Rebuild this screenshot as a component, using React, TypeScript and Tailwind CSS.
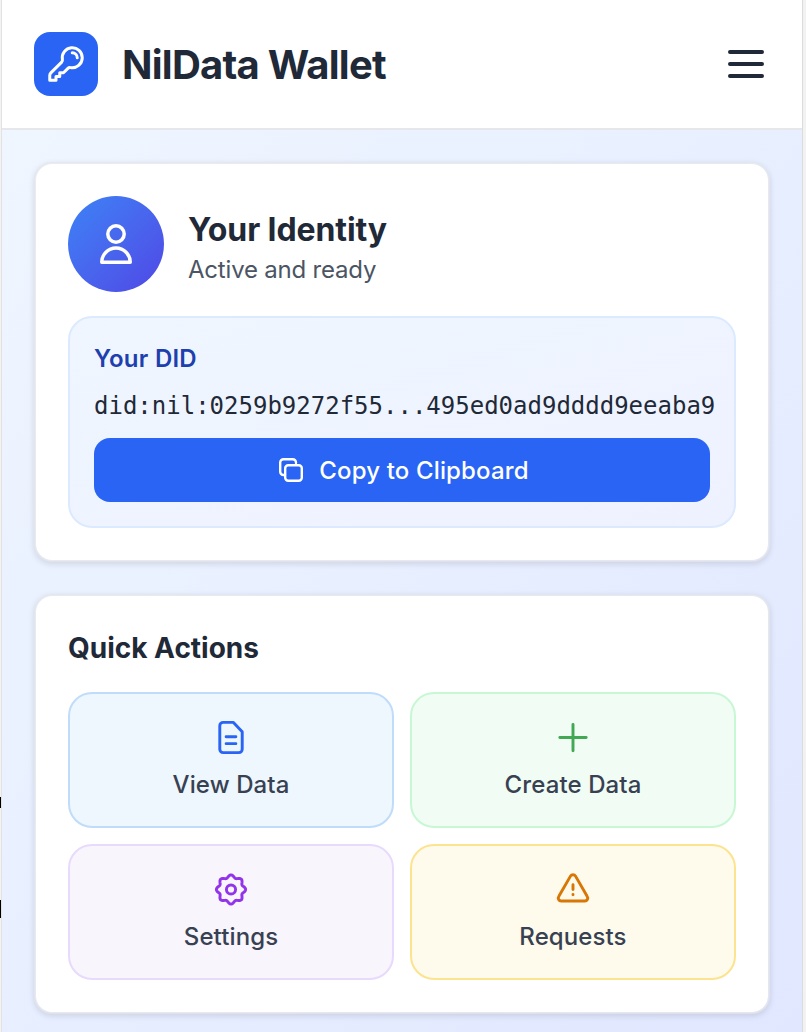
import React from "react";

// eight soft lobes, computed once instead of a long hand written path
const gearPath = (() => {
  const points: string[] = [];
  for (let i = 0; i < 96; i++) {
    const angle = (i / 96) * Math.PI * 2;
    const radius = 13.6 + 1.4 * Math.cos(8 * angle);
    const x = 20 + radius * Math.sin(angle);
    const y = 20 - radius * Math.cos(angle);
    points.push(`${x.toFixed(2)} ${y.toFixed(2)}`);
  }
  return `M${points.join("L")}Z`;
})();

const KeyIcon = () => (
  <svg viewBox="0 0 24 24" fill="none" stroke="currentColor" strokeWidth={1.8} strokeLinecap="round" strokeLinejoin="round" className="w-10 h-10 text-white">
    <path d="M15.75 5.25a3 3 0 0 1 3 3m3 0a6 6 0 0 1-7.029 5.912c-.563-.097-1.159.026-1.563.43L10.5 17.25H8.25v2.25H6v2.25H2.25v-2.818c0-.597.237-1.17.659-1.591l6.499-6.499c.404-.404.527-1 .43-1.563A6 6 0 1 1 21.75 8.25Z" />
  </svg>
);

const MenuIcon = () => (
  <svg viewBox="0 0 48 48" fill="none" stroke="currentColor" strokeWidth={4} strokeLinecap="round" className="w-12 h-12 text-[#1f2937]">
    <path d="M8 12H40M8 24H40M8 36H40" />
  </svg>
);

const UserIcon = () => (
  <svg viewBox="0 0 24 24" fill="none" stroke="currentColor" strokeWidth={1.75} strokeLinejoin="round" className="w-12 h-12 text-white">
    <circle cx="12" cy="7" r="4.1" />
    <path d="M4.875 21.125a7.125 7.125 0 0 1 14.25 0Z" />
  </svg>
);

const CopyIcon = () => (
  <svg viewBox="0 0 24 24" fill="none" stroke="currentColor" strokeWidth={2.4} strokeLinecap="round" strokeLinejoin="round" className="w-6 h-6 text-white">
    <rect x="6.2" y="7.2" width="16.6" height="15.6" rx="3" />
    <path d="M17 5v-.5a3.3 3.3 0 0 0-3.3-3.3H4.5a3.3 3.3 0 0 0-3.3 3.3v9.2A3.3 3.3 0 0 0 4.5 17H5" />
  </svg>
);

const DocIcon = () => (
  <svg viewBox="0 0 40 40" fill="none" stroke="currentColor" strokeWidth={3} strokeLinecap="round" strokeLinejoin="round" className="w-10 h-10 text-[#2964f5]">
    <path d="M12 4.5H22.5L31.5 14V32a3.5 3.5 0 0 1-3.5 3.5H12A3.5 3.5 0 0 1 8.5 32V8A3.5 3.5 0 0 1 12 4.5Z" />
    <path d="M15 19.3H25M15 26.3H25" />
  </svg>
);

const PlusIcon = () => (
  <svg viewBox="0 0 40 40" fill="none" stroke="currentColor" strokeWidth={3} strokeLinecap="round" className="w-10 h-10 text-[#43a853]">
    <path d="M20 6.5V33.5M6.5 20H33.5" />
  </svg>
);

const GearIcon = () => (
  <svg viewBox="0 0 40 40" fill="none" stroke="currentColor" strokeWidth={3} strokeLinejoin="round" className="w-10 h-10 text-[#9333ea]">
    <path d={gearPath} />
    <circle cx="20" cy="20" r="4.7" />
  </svg>
);

const WarningIcon = () => (
  <svg viewBox="0 0 40 40" fill="none" stroke="currentColor" strokeWidth={3} strokeLinecap="round" strokeLinejoin="round" className="w-10 h-10 text-[#d97706]">
    <path d="M17.4 6.3a3 3 0 0 1 5.2 0L34.5 27a3 3 0 0 1-2.6 4.8H8.1a3 3 0 0 1-2.6-4.8Z" />
    <path d="M20 15V20M20 25.2V25.3" />
  </svg>
);

const actions = [
  { label: "View Data", icon: <DocIcon />, tile: "bg-[#eef6fe] border-[#c0dcfb]" },
  { label: "Create Data", icon: <PlusIcon />, tile: "bg-[#f1fcf4] border-[#c8f7d4]" },
  { label: "Settings", icon: <GearIcon />, tile: "bg-[#f8f5fd] border-[#e8dafc]" },
  { label: "Requests", icon: <WarningIcon />, tile: "bg-[#fefbec] border-[#fce38f]" },
];

const cardClass =
  "bg-white rounded-[18px] border-2 border-[#e5e7eb]/70 bg-clip-padding shadow-[0_2px_6px_rgba(0,0,0,0.12)] p-8";

export default function App() {
  return (
    <div className="flex w-[806px] h-[1032px] overflow-hidden bg-white font-['Inter',sans-serif]">
      <div className="relative w-[2px] shrink-0 bg-[#f3f3f3] border-r border-[#e2e2e2]">
        <div className="absolute left-0 top-[797px] w-px h-[11px] bg-black" />
        <div className="absolute left-0 top-[900px] w-px h-[18px] bg-black" />
      </div>

      <div className="w-[800px] shrink-0 flex flex-col">
        <header className="flex items-center justify-between bg-white border-b-2 border-[#e5e7eb] p-8 shrink-0">
          <div className="flex items-center gap-6">
            <div className="w-16 h-16 rounded-2xl bg-[#2964f5] flex items-center justify-center">
              <KeyIcon />
            </div>
            <h1 className="mt-[2px] text-[40px] leading-[56px] tracking-[-0.75px] font-bold text-[#1f2937]">NilData Wallet</h1>
          </div>
          <MenuIcon />
        </header>

        <main className="flex-1 bg-gradient-to-br from-[#eff6ff] to-[#e0e7ff] p-8 flex flex-col gap-8">
          <section className={cardClass}>
            <div className="flex items-center gap-6 mb-6">
              <div className="w-24 h-24 rounded-full bg-gradient-to-br from-[#3b82f6] to-[#4f46e5] flex items-center justify-center">
                <UserIcon />
              </div>
              <div className="mt-2">
                <h2 className="text-[32px] leading-[44px] tracking-[-0.1px] font-[650] text-[#1f2937]">Your Identity</h2>
                <p className="text-2xl leading-9 tracking-[-0.2px] text-[#4b5563]">Active and ready</p>
              </div>
            </div>

            <div className="rounded-3xl border-2 border-[#dbeafe] bg-gradient-to-br from-[#eff6ff] to-[#eef2ff] p-6">
              <p className="text-2xl leading-[34px] tracking-[0.25px] font-semibold text-[#1e40af] mb-3">Your DID</p>
              <p className="text-2xl leading-9 font-['DejaVu_Sans_Mono',monospace] text-[#1f2937] whitespace-nowrap mb-[14px]">
                did:nil:0259b9272f55...495ed0ad9dddd9eeaba9
              </p>
              <button className="w-full h-16 pl-1 rounded-2xl bg-[#2964f5] flex items-center justify-center gap-4 text-2xl tracking-[0.15px] font-[450] text-white">
                <CopyIcon />
                <span className="mt-[2px]">Copy to Clipboard</span>
              </button>
            </div>
          </section>

          <section className={cardClass}>
            <h3 className="text-[28px] leading-10 tracking-[0px] font-[650] text-[#1f2937] mb-6">Quick Actions</h3>
            <div className="grid grid-cols-2 gap-4">
              {actions.map((action) => (
                <button
                  key={action.label}
                  className={`h-[136px] rounded-3xl border-2 p-6 flex flex-col items-center ${action.tile}`}
                >
                  {action.icon}
                  <span className="mt-[11px] text-2xl leading-[34px] tracking-[0.1px] font-[450] text-[#374151]">{action.label}</span>
                </button>
              ))}
            </div>
          </section>
        </main>
      </div>

      <div className="flex-1 bg-[#f2f2f2] border-l border-[#dcdcdc]" />
    </div>
  );
}
